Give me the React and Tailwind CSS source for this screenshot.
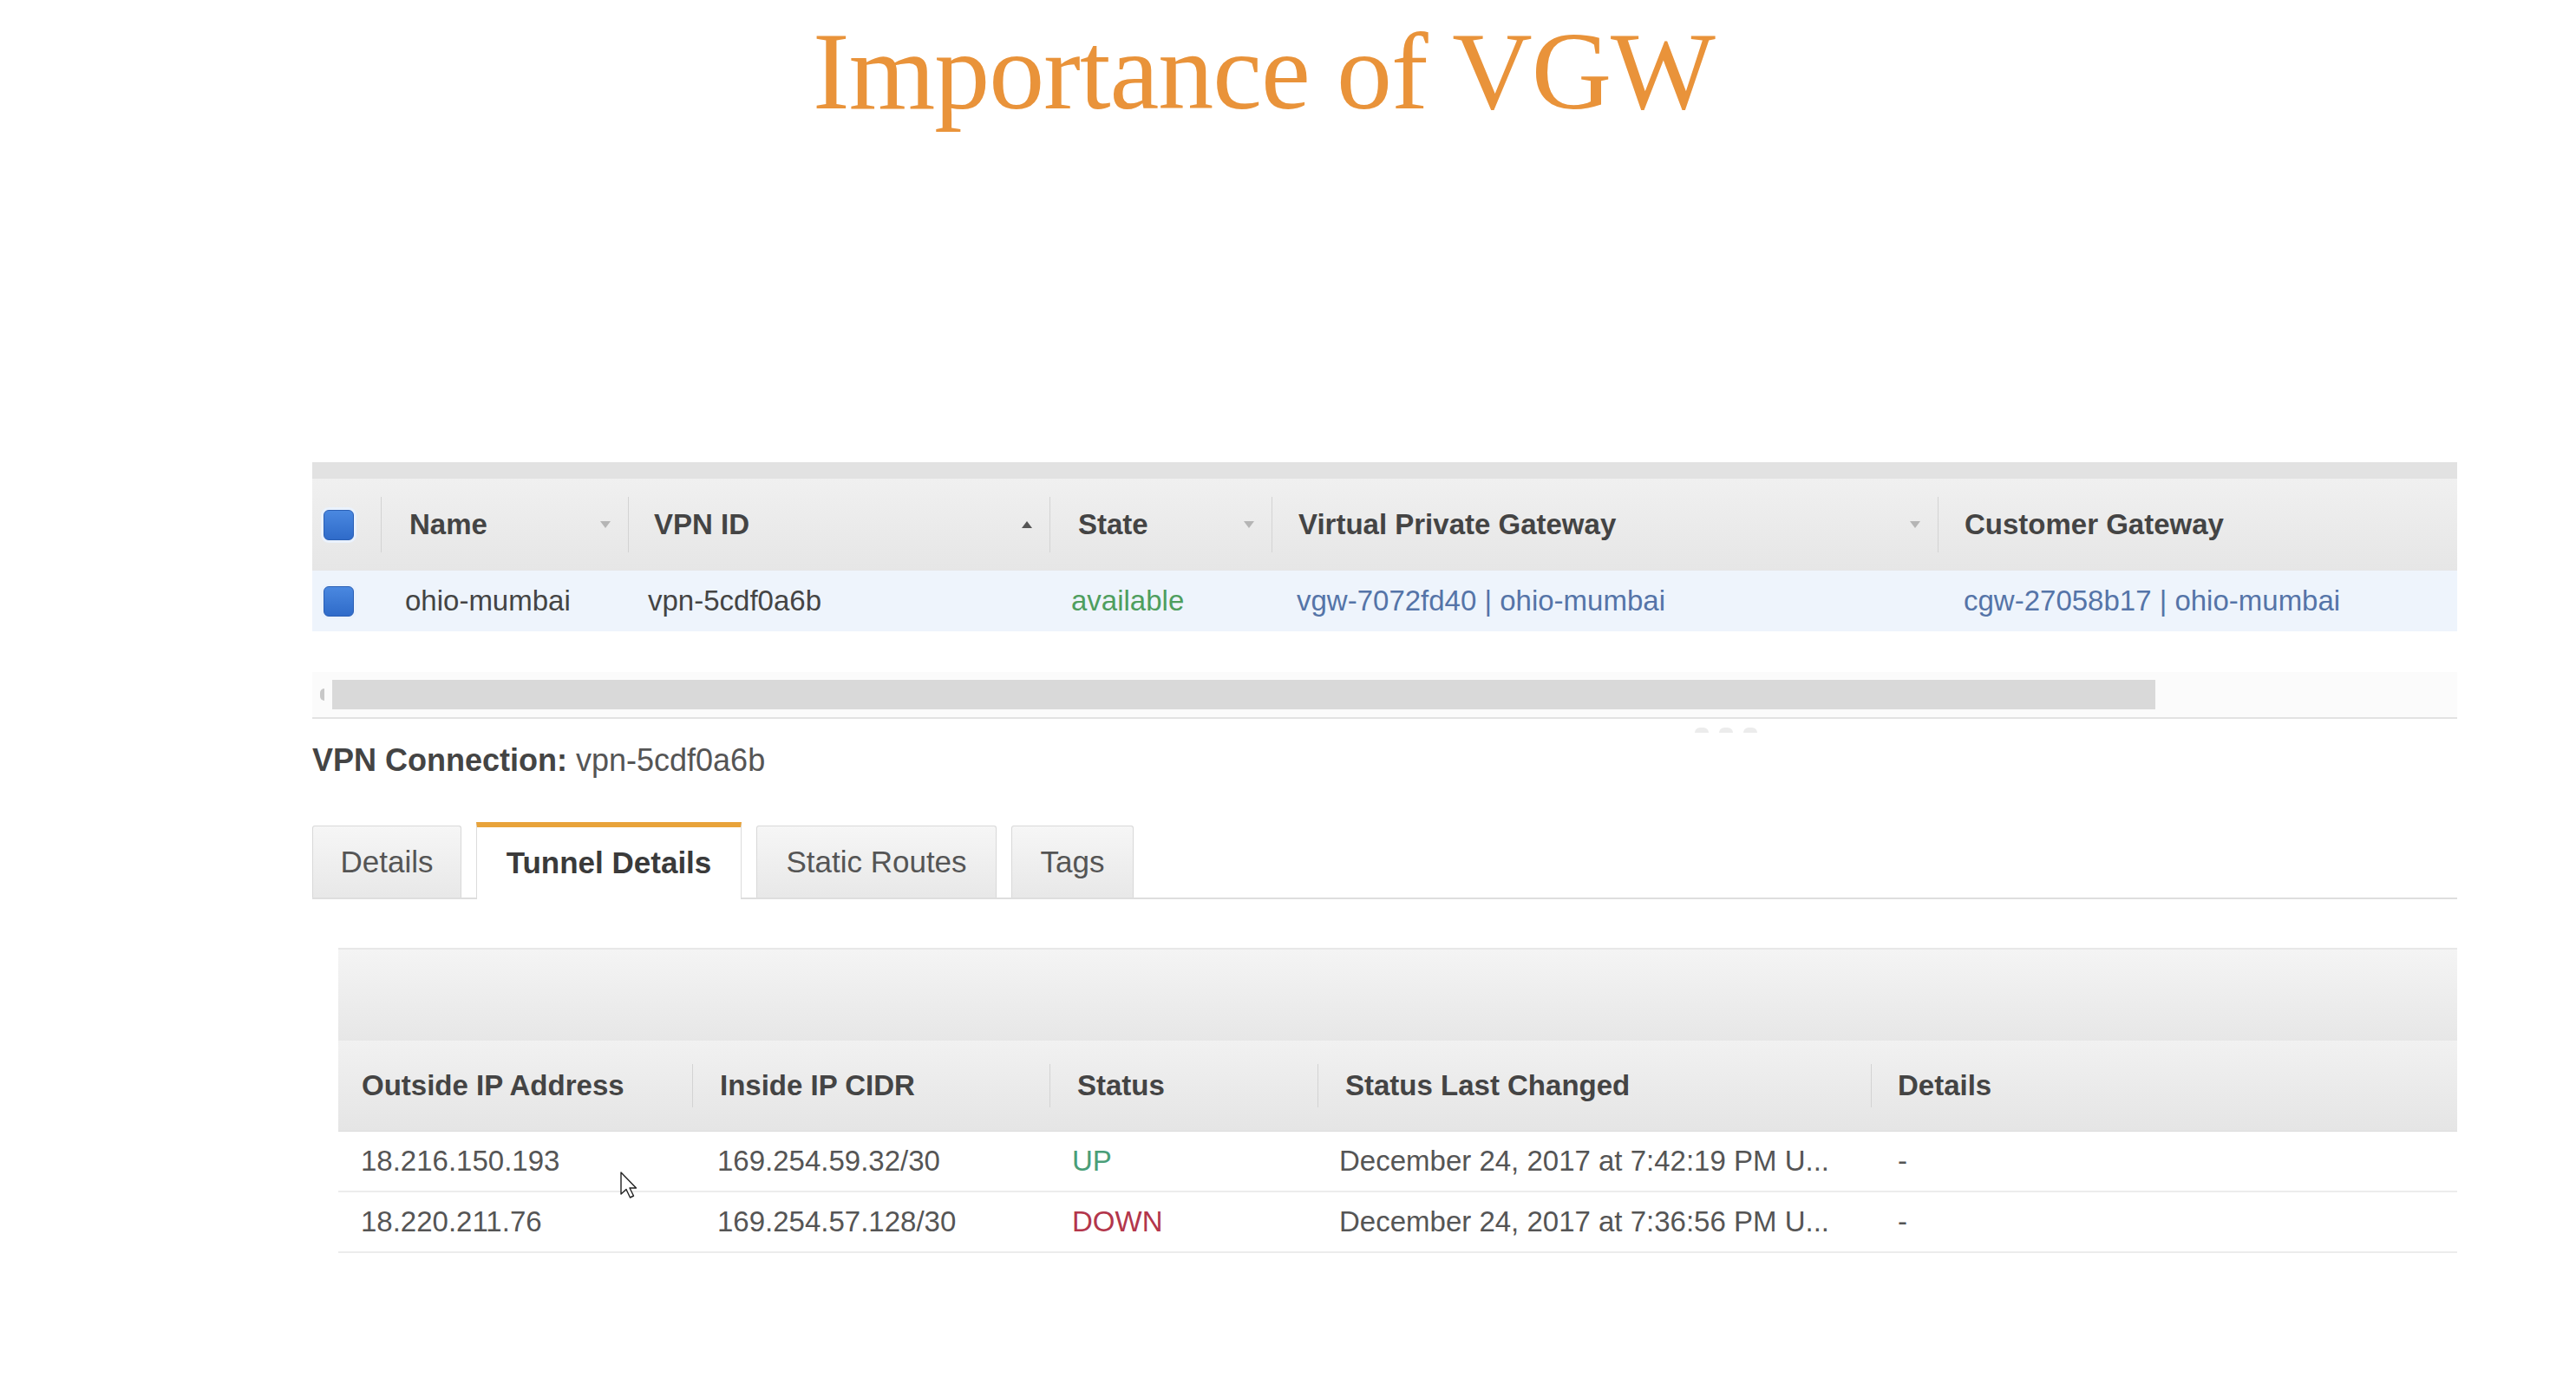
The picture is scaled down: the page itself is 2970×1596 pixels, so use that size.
import React from "react";

const SANS = { fontFamily: '"Liberation Sans", Arial, sans-serif' };

const Checkbox = () => (
  <div className="w-[41px] h-[41px] rounded-[9px] bg-[#eaf2fd] flex items-center justify-center">
    <div className="w-[35px] h-[35px] rounded-[6px] bg-gradient-to-b from-[#4a88e0] to-[#2f6bc9] border border-[#2a5fb5]" />
  </div>
);

const Arrow = ({ up, dark }) => (
  <svg width="12" height="8" viewBox="0 0 12 8" className="shrink-0">
    {up ? (
      <path d="M6 0 L12 8 L0 8 Z" fill={dark ? "#555" : "#aaa"} />
    ) : (
      <path d="M0 0 L12 0 L6 8 Z" fill={dark ? "#555" : "#b5b5b5"} />
    )}
  </svg>
);

const Divider = ({ h = "h-[52px]" }) => <div className={`w-px ${h} bg-[#d3d3d3] shrink-0`} />;

const Cursor = () => (
  <svg width="24" height="34" viewBox="0 0 24 34" className="absolute left-[714px] top-[1350px]">
    <path
      d="M2 2 L2 27 L8 21.5 L12.5 31 L16.5 29 L12 20 L19.5 20 Z"
      fill="#fff"
      stroke="#222"
      strokeWidth="1.4"
      strokeLinejoin="round"
    />
  </svg>
);

const topCols = [
  { label: "Name", w: "w-[284px]", pl: "pl-[32px]", arrow: "down" },
  { label: "VPN ID", w: "w-[485px]", pl: "pl-[29px]", arrow: "up" },
  { label: "State", w: "w-[255px]", pl: "pl-[32px]", arrow: "down" },
  { label: "Virtual Private Gateway", w: "w-[767px]", pl: "pl-[30px]", arrow: "down" },
  { label: "Customer Gateway", w: "flex-1", pl: "pl-[30px]", arrow: null },
];

const tunnelCols = [
  { label: "Outside IP Address", w: "w-[408px]", pl: "pl-[27px]" },
  { label: "Inside IP CIDR", w: "w-[411px]", pl: "pl-[31px]" },
  { label: "Status", w: "w-[308px]", pl: "pl-[31px]" },
  { label: "Status Last Changed", w: "w-[637px]", pl: "pl-[31px]" },
  { label: "Details", w: "flex-1", pl: "pl-[30px]" },
];

const tunnels = [
  {
    outside: "18.216.150.193",
    inside: "169.254.59.32/30",
    status: "UP",
    changed: "December 24, 2017 at 7:42:19 PM U...",
  },
  {
    outside: "18.220.211.76",
    inside: "169.254.57.128/30",
    status: "DOWN",
    changed: "December 24, 2017 at 7:36:56 PM U...",
  },
];

const tabs = [
  { label: "Details", w: "w-[172px]" },
  { label: "Tunnel Details", w: "w-[306px]", active: true },
  { label: "Static Routes", w: "w-[277px]" },
  { label: "Tags", w: "w-[141px]" },
];

export default function App() {
  return (
    <div className="relative w-[2970px] h-[1596px] bg-white overflow-hidden" style={SANS}>
      {/* Slide title */}
      <div className="h-[533px] flex justify-center pr-[56px] pt-[18px]">
        <h1
          className="text-[128px] leading-none text-[#e9933a] tracking-[-1px]"
          style={{ fontFamily: '"Liberation Serif", "Times New Roman", serif' }}
        >
          Importance of VGW
        </h1>
      </div>

      <div className="ml-[360px] w-[2473px]">
        {/* VPN connections table */}
        <div className="h-[19px] bg-[#e2e2e2]" />
        <div className="h-[106px] flex items-center bg-gradient-to-b from-[#f0f0f0] to-[#e6e6e6] text-[33px] font-bold text-[#444]">
          <div className="w-[79px] h-full flex items-center pl-[10px]">
            <Checkbox />
          </div>
          <Divider h="h-[64px]" />
          {topCols.map((c, i) => (
            <React.Fragment key={c.label}>
              <div className={`${c.w} h-full flex items-center justify-between ${c.pl} pr-[20px]`}>
                <span>{c.label}</span>
                {c.arrow && <Arrow up={c.arrow === "up"} dark={c.arrow === "up"} />}
              </div>
              {i < topCols.length - 1 && <Divider h="h-[64px]" />}
            </React.Fragment>
          ))}
        </div>
        <div className="h-[70px] flex items-center bg-[#eef4fc] text-[33px] text-[#444]">
          <div className="w-[80px] pl-[10px]">
            <Checkbox />
          </div>
          <div className="w-[284px] pl-[27px]">ohio-mumbai</div>
          <div className="w-[486px] pl-[23px]">vpn-5cdf0a6b</div>
          <div className="w-[256px] pl-[25px] text-[#4e9e5e]">available</div>
          <div className="w-[768px] pl-[29px] text-[#5574a8]">vgw-7072fd40 | ohio-mumbai</div>
          <div className="flex-1 pl-[30px] text-[#5574a8]">cgw-27058b17 | ohio-mumbai</div>
        </div>

        {/* Horizontal scrollbar */}
        <div className="relative mt-[47px] h-[54px] bg-[#fbfbfb] border-b-2 border-[#e2e2e2] flex items-center">
          <div className="w-[23px] flex justify-center">
            <div className="w-[5px] h-[14px] rounded-l-full bg-[#c8c8c8]" />
          </div>
          <div className="w-[2102px] h-[34px] bg-[#d9d9d9]" />
          <div className="absolute left-[1594px] -bottom-[18px] flex gap-[12px]">
            <div className="w-[16px] h-[6px] rounded-t-full bg-[#ececec]" />
            <div className="w-[16px] h-[6px] rounded-t-full bg-[#ececec]" />
            <div className="w-[16px] h-[6px] rounded-t-full bg-[#ececec]" />
          </div>
        </div>

        {/* Details pane */}
        <div className="h-[96px] flex items-center text-[36px] text-[#555]">
          <span className="font-bold text-[#444]">VPN Connection:</span>
          <span className="ml-[10px]">vpn-5cdf0a6b</span>
        </div>

        <div className="mt-[24px] h-[88px] flex items-end gap-[17px] border-b-2 border-[#dedede]">
          {tabs.map((t) =>
            t.active ? (
              <div
                key={t.label}
                className={`${t.w} h-[89px] -mb-[2px] bg-white border-t-[6px] border-t-[#e8a33a] border-x border-x-[#dcdcdc] flex items-center justify-center text-[35px] font-bold text-[#3a3a3a]`}
              >
                {t.label}
              </div>
            ) : (
              <div
                key={t.label}
                className={`${t.w} h-[83px] rounded-t-[3px] bg-gradient-to-b from-[#f6f6f6] to-[#e8e8e8] border border-b-0 border-[#d8d8d8] flex items-center justify-center text-[35px] text-[#555]`}
              >
                {t.label}
              </div>
            )
          )}
        </div>

        <div className="mt-[56px] ml-[30px]">
          <div className="h-[107px] bg-gradient-to-b from-[#f4f4f4] to-[#e7e7e7] border-t-2 border-[#e8e8e8]" />
          <div className="h-[105px] flex items-center bg-gradient-to-b from-[#f1f1f1] to-[#e5e5e5] text-[33px] font-bold text-[#444] border-b border-[#dcdcdc]">
            {tunnelCols.map((c, i) => (
              <React.Fragment key={c.label}>
                <div className={`${c.w} ${c.pl} h-full flex items-center`}>{c.label}</div>
                {i < tunnelCols.length - 1 && <Divider h="h-[50px]" />}
              </React.Fragment>
            ))}
          </div>
          {tunnels.map((t) => (
            <div key={t.outside} className="h-[70px] flex items-center border-b-2 border-[#ececec] text-[33px] text-[#555]">
              <div className="w-[409px] pl-[26px]">{t.outside}</div>
              <div className="w-[412px] pl-[28px]">{t.inside}</div>
              <div className={`w-[309px] pl-[25px] ${t.status === "UP" ? "text-[#4a9e78]" : "text-[#b3364b]"}`}>
                {t.status}
              </div>
              <div className="w-[638px] pl-[24px] whitespace-nowrap">{t.changed}</div>
              <div className="flex-1 pl-[30px]">-</div>
            </div>
          ))}
        </div>
      </div>

      <Cursor />
    </div>
  );
}
